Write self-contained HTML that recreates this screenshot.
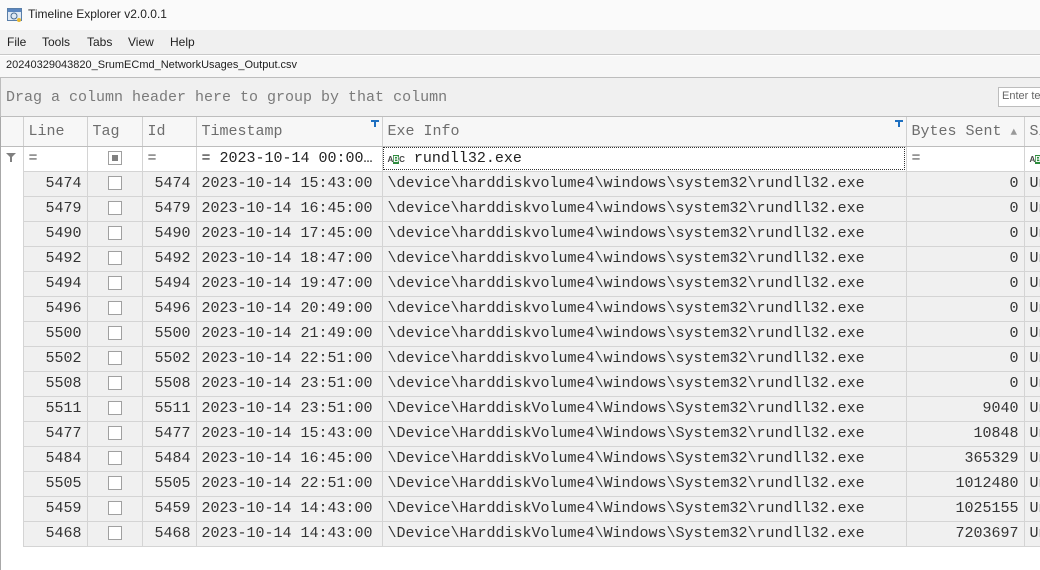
<!DOCTYPE html>
<html><head><meta charset="utf-8"><style>
*{margin:0;padding:0;box-sizing:border-box}
body{width:1040px;height:570px;overflow:hidden;background:#fff;font-family:"Liberation Sans",sans-serif;position:relative}
.abs{position:absolute}
.mono{font-family:"Liberation Mono","DejaVu Sans Mono",monospace;font-size:15px}
table{position:absolute;left:0;top:117px;border-collapse:collapse;table-layout:fixed;width:1060px}
td{height:25px;border:1px solid #d4d4d4;border-top:none;border-left:none;white-space:nowrap;overflow:hidden;padding:0 5px;font-family:"Liberation Mono","DejaVu Sans Mono",monospace;font-size:15px;color:#333;background:#f0f0f0}
td.r{text-align:right}
td.ind{background:#fff;border-bottom:none;border-right:1px solid #d4d4d4}
tr.h td{height:29px;background:#f7f7f7;color:#6d6d6d;border-bottom:1px solid #bdbdbd;border-right:1px solid #d0d0d0}
tr.f td{height:25px;background:#fff}
.cb{display:inline-block;width:14px;height:14px;border:1px solid #a0a0a0;background:#fff;vertical-align:middle}
</style></head><body>
<div class="abs" style="left:0;top:0;width:1040px;height:30px;background:#fafafa"></div>
<svg class="abs" style="left:7px;top:7px" width="16" height="16"><rect x="0.5" y="1.5" width="14" height="12" fill="#dfe9f5" stroke="#5a7fa8"/><rect x="1" y="2" width="13" height="3" fill="#5a86c0"/><circle cx="7" cy="9" r="3" fill="none" stroke="#4a6c90"/><circle cx="12" cy="13" r="2" fill="#e8b830"/></svg>
<div class="abs" style="left:28px;top:7px;font-size:12px;color:#222">Timeline Explorer v2.0.0.1</div>
<div class="abs" style="left:0;top:30px;width:1040px;height:25px;background:#f0f0f0;border-bottom:1px solid #c8c8c8"></div>
<div class="abs" style="left:7px;top:35px;font-size:12px;color:#222">File</div>
<div class="abs" style="left:42px;top:35px;font-size:12px;color:#222">Tools</div>
<div class="abs" style="left:87px;top:35px;font-size:12px;color:#222">Tabs</div>
<div class="abs" style="left:128px;top:35px;font-size:12px;color:#222">View</div>
<div class="abs" style="left:170px;top:35px;font-size:12px;color:#222">Help</div>
<div class="abs" style="left:0;top:56px;width:1040px;height:22px;background:#f7f7f7;border-bottom:1px solid #bdbdbd"></div>
<div class="abs" style="left:6px;top:59px;font-size:11px;color:#222">20240329043820_SrumECmd_NetworkUsages_Output.csv</div>
<div class="abs" style="left:0;top:78px;width:1040px;height:39px;background:#f0f0f0;border-left:1px solid #bdbdbd;border-bottom:1px solid #bdbdbd"></div>
<div class="abs mono" style="left:6px;top:89px;color:#7a7a7a">Drag a column header here to group by that column</div>
<div class="abs" style="left:998px;top:87px;width:50px;height:20px;background:#fff;border:1px solid #bdbdbd;font-size:11px;color:#666;padding:2px 3px;white-space:nowrap">Enter te</div>
<div class="abs" style="left:0;top:117px;width:1px;height:453px;background:#a8a8a8;z-index:2"></div>
<table>
<colgroup><col style="width:23px"><col style="width:64px"><col style="width:55px"><col style="width:54px"><col style="width:186px"><col style="width:524px"><col style="width:118px"><col style="width:36px"></colgroup>
<tr class="h"><td class="ind" style="background:#f7f7f7;border-bottom:1px solid #bdbdbd"></td><td>Line</td><td>Tag</td><td>Id</td><td style="position:relative">Timestamp<svg style="position:absolute;right:3px;top:3px" width="8" height="7"><path d="M0 0H8V2H5V7H3V2H0Z" fill="#1e6fc0"/></svg></td><td style="position:relative">Exe Info<svg style="position:absolute;right:3px;top:3px" width="8" height="7"><path d="M0 0H8V2H5V7H3V2H0Z" fill="#1e6fc0"/></svg></td><td>Bytes Sent <span style="color:#999;font-size:11px">▲</span></td><td>Si</td></tr>
<tr class="f"><td class="ind" style="text-align:center;padding:0"><svg width="10" height="9"><path d="M0 0H10L6 4V9H4V4Z" fill="#808080"/></svg></td><td style="color:#555">=</td><td style="text-align:center"><span class="cb" style="position:relative"><span style="position:absolute;left:3px;top:3px;width:6px;height:6px;background:#808080"></span></span></td><td style="color:#555">=</td><td style="color:#222">= 2023-10-14 00:00…</td><td style="outline:1px dotted #333;outline-offset:-2px;color:#222"><span style="font-size:8px;font-family:'Liberation Sans';font-weight:bold;color:#444">A<span style="background:#2e8b3e;color:#fff">B</span>C</span> rundll32.exe</td><td style="color:#555">=</td><td><span style="font-size:8px;font-family:'Liberation Sans';font-weight:bold;color:#444">A<span style="background:#2e8b3e;color:#fff">B</span></span></td></tr>
<tr><td class="ind"></td><td class="r">5474</td><td style="text-align:center"><span class="cb"></span></td><td class="r">5474</td><td>2023-10-14 15:43:00</td><td>\device\harddiskvolume4\windows\system32\rundll32.exe</td><td class="r">0</td><td>Un</td></tr>
<tr><td class="ind"></td><td class="r">5479</td><td style="text-align:center"><span class="cb"></span></td><td class="r">5479</td><td>2023-10-14 16:45:00</td><td>\device\harddiskvolume4\windows\system32\rundll32.exe</td><td class="r">0</td><td>Un</td></tr>
<tr><td class="ind"></td><td class="r">5490</td><td style="text-align:center"><span class="cb"></span></td><td class="r">5490</td><td>2023-10-14 17:45:00</td><td>\device\harddiskvolume4\windows\system32\rundll32.exe</td><td class="r">0</td><td>Un</td></tr>
<tr><td class="ind"></td><td class="r">5492</td><td style="text-align:center"><span class="cb"></span></td><td class="r">5492</td><td>2023-10-14 18:47:00</td><td>\device\harddiskvolume4\windows\system32\rundll32.exe</td><td class="r">0</td><td>Un</td></tr>
<tr><td class="ind"></td><td class="r">5494</td><td style="text-align:center"><span class="cb"></span></td><td class="r">5494</td><td>2023-10-14 19:47:00</td><td>\device\harddiskvolume4\windows\system32\rundll32.exe</td><td class="r">0</td><td>Un</td></tr>
<tr><td class="ind"></td><td class="r">5496</td><td style="text-align:center"><span class="cb"></span></td><td class="r">5496</td><td>2023-10-14 20:49:00</td><td>\device\harddiskvolume4\windows\system32\rundll32.exe</td><td class="r">0</td><td>Un</td></tr>
<tr><td class="ind"></td><td class="r">5500</td><td style="text-align:center"><span class="cb"></span></td><td class="r">5500</td><td>2023-10-14 21:49:00</td><td>\device\harddiskvolume4\windows\system32\rundll32.exe</td><td class="r">0</td><td>Un</td></tr>
<tr><td class="ind"></td><td class="r">5502</td><td style="text-align:center"><span class="cb"></span></td><td class="r">5502</td><td>2023-10-14 22:51:00</td><td>\device\harddiskvolume4\windows\system32\rundll32.exe</td><td class="r">0</td><td>Un</td></tr>
<tr><td class="ind"></td><td class="r">5508</td><td style="text-align:center"><span class="cb"></span></td><td class="r">5508</td><td>2023-10-14 23:51:00</td><td>\device\harddiskvolume4\windows\system32\rundll32.exe</td><td class="r">0</td><td>Un</td></tr>
<tr><td class="ind"></td><td class="r">5511</td><td style="text-align:center"><span class="cb"></span></td><td class="r">5511</td><td>2023-10-14 23:51:00</td><td>\Device\HarddiskVolume4\Windows\System32\rundll32.exe</td><td class="r">9040</td><td>Un</td></tr>
<tr><td class="ind"></td><td class="r">5477</td><td style="text-align:center"><span class="cb"></span></td><td class="r">5477</td><td>2023-10-14 15:43:00</td><td>\Device\HarddiskVolume4\Windows\System32\rundll32.exe</td><td class="r">10848</td><td>Un</td></tr>
<tr><td class="ind"></td><td class="r">5484</td><td style="text-align:center"><span class="cb"></span></td><td class="r">5484</td><td>2023-10-14 16:45:00</td><td>\Device\HarddiskVolume4\Windows\System32\rundll32.exe</td><td class="r">365329</td><td>Un</td></tr>
<tr><td class="ind"></td><td class="r">5505</td><td style="text-align:center"><span class="cb"></span></td><td class="r">5505</td><td>2023-10-14 22:51:00</td><td>\Device\HarddiskVolume4\Windows\System32\rundll32.exe</td><td class="r">1012480</td><td>Un</td></tr>
<tr><td class="ind"></td><td class="r">5459</td><td style="text-align:center"><span class="cb"></span></td><td class="r">5459</td><td>2023-10-14 14:43:00</td><td>\Device\HarddiskVolume4\Windows\System32\rundll32.exe</td><td class="r">1025155</td><td>Un</td></tr>
<tr><td class="ind"></td><td class="r">5468</td><td style="text-align:center"><span class="cb"></span></td><td class="r">5468</td><td>2023-10-14 14:43:00</td><td>\Device\HarddiskVolume4\Windows\System32\rundll32.exe</td><td class="r">7203697</td><td>Un</td></tr>
</table>
</body></html>
